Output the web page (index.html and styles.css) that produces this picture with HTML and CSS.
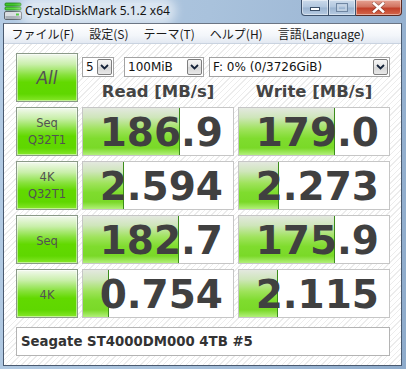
FILE: index.html
```html
<!DOCTYPE html>
<html lang="ja">
<head>
<meta charset="utf-8">
<title>CrystalDiskMark</title>
<link rel="stylesheet" href="styles.css">
</head>
<body>
<div class="window">
  <div class="titlebar">
    <svg class="app-icon" width="20" height="19" viewBox="0 0 20 19">
      <rect x="2" y="1" width="16" height="3" rx="1" fill="#3fc62a" stroke="#1f7d17" stroke-width="0.8"/>
      <rect x="2" y="5" width="16" height="3" rx="1" fill="#55d63a" stroke="#1f7d17" stroke-width="0.8"/>
      <rect x="1.5" y="9.5" width="17" height="8" rx="1.5" fill="#d9dde2" stroke="#5f6770" stroke-width="1"/>
      <rect x="2.5" y="14" width="15" height="3" fill="#aab1b9"/>
      <rect x="13" y="11.5" width="3" height="2" fill="#36c524"/>
    </svg>
    <span class="title">CrystalDiskMark 5.1.2 x64</span>
    <div class="captions">
      <div class="cb min"><svg width="10" height="4" viewBox="0 0 10 4"><rect x="0.5" y="0.5" width="9" height="3" fill="#fff" stroke="#3b4f68" stroke-width="1"/></svg></div>
      <div class="cb max"><svg width="12" height="9" viewBox="0 0 12 9"><rect x="0.5" y="0.5" width="11" height="8" fill="none" stroke="#6f86a2" stroke-width="1"/><rect x="2" y="2.5" width="8" height="4.5" fill="none" stroke="#c5d3e4" stroke-width="1.5"/></svg></div>
      <div class="cb close"><svg width="13" height="11" viewBox="0 0 13 11"><path d="M2 1.5 L11 9.5 M11 1.5 L2 9.5" stroke="#3a1d18" stroke-width="4" stroke-linecap="square" opacity="0.35"/><path d="M2 1.5 L11 9.5 M11 1.5 L2 9.5" stroke="#fff" stroke-width="2.6" stroke-linecap="square"/></svg></div>
    </div>
  </div>
  <div class="frame">
    <div class="menubar">
      <span class="menu-item">ファイル(F)</span>
      <span class="menu-item">設定(S)</span>
      <span class="menu-item">テーマ(T)</span>
      <span class="menu-item">ヘルプ(H)</span>
      <span class="menu-item">言語(Language)</span>
    </div>
    <div class="client">
      <div class="grid">
        <div class="btn all">All</div>
        <div class="controls">
          <div class="combos">
            <div class="combo c-count"><span class="combo-text">5</span><span class="drop"><svg width="9" height="6" viewBox="0 0 9 6"><path d="M1 1 L4.5 4.5 L8 1" fill="none" stroke="#142238" stroke-width="1.8"/></svg></span></div>
            <div class="combo c-size"><span class="combo-text">100MiB</span><span class="drop"><svg width="9" height="6" viewBox="0 0 9 6"><path d="M1 1 L4.5 4.5 L8 1" fill="none" stroke="#142238" stroke-width="1.8"/></svg></span></div>
            <div class="combo c-drive"><span class="combo-text">F: 0% (0/3726GiB)</span><span class="drop"><svg width="9" height="6" viewBox="0 0 9 6"><path d="M1 1 L4.5 4.5 L8 1" fill="none" stroke="#142238" stroke-width="1.8"/></svg></span></div>
          </div>
          <div class="heads">
            <div class="head">Read [MB/s]</div>
            <div class="head">Write [MB/s]</div>
          </div>
        </div>

        <div class="btn two"><span>Seq</span><span>Q32T1</span></div>
        <div class="cell"><div class="bar" style="width:97px"></div><span class="val">186.9</span></div>
        <div class="cell"><div class="bar" style="width:96px"></div><span class="val">179.0</span></div>

        <div class="btn two"><span>4K</span><span>Q32T1</span></div>
        <div class="cell"><div class="bar" style="width:41px"></div><span class="val">2.594</span></div>
        <div class="cell"><div class="bar" style="width:40px"></div><span class="val">2.273</span></div>

        <div class="btn one">Seq</div>
        <div class="cell"><div class="bar" style="width:96px"></div><span class="val">182.7</span></div>
        <div class="cell"><div class="bar" style="width:96px"></div><span class="val">175.9</span></div>

        <div class="btn one">4K</div>
        <div class="cell"><div class="bar" style="width:26px"></div><span class="val">0.754</span></div>
        <div class="cell"><div class="bar" style="width:39px"></div><span class="val">2.115</span></div>
      </div>
      <div class="comment">Seagate ST4000DM000 4TB #5</div>
    </div>
  </div>
</div>
</body>
</html>
```
FILE: styles.css
```css
* { box-sizing: border-box; }
html, body { margin: 0; padding: 0; }
body {
  width: 406px;
  height: 369px;
  overflow: hidden;
  font-family: "DejaVu Sans", sans-serif;
}
.window {
  width: 406px;
  height: 369px;
  background: linear-gradient(100deg, #b3cbe4 0%, #a9c2dc 45%, #9fb9d6 70%, #8eabcb 100%);
  display: flex;
  flex-direction: column;
}
.titlebar {
  height: 23px;
  display: flex;
  align-items: flex-start;
  flex-shrink: 0;
}
.app-icon {
  margin: 2px 0 0 3px;
  flex-shrink: 0;
}
.title {
  margin: 3px 0 0 2px;
  font-family: "Noto Sans", sans-serif;
  font-size: 12px;
  line-height: 16px;
  color: #141414;
  background: rgba(255, 255, 255, 0.55);
  border-radius: 8px;
  box-shadow: 0 0 10px 6px rgba(255, 255, 255, 0.55);
}
.captions {
  margin-left: auto;
  margin-right: 4px;
  display: flex;
}
.cb {
  height: 16px;
  border: 1px solid #3e526c;
  border-top: none;
  display: flex;
  align-items: center;
  justify-content: center;
  box-shadow: inset 0 0 0 1px rgba(255, 255, 255, 0.45);
}
.min {
  width: 28px;
  border-radius: 0 0 0 4px;
  background: linear-gradient(#cbdaeb, #b1c6de 48%, #9ab3d0 52%, #b7cbe2);
  padding-top: 3px;
}
.max {
  width: 27px;
  border-left: none;
  background: linear-gradient(#cbdaeb, #b1c6de 48%, #9ab3d0 52%, #b7cbe2);
}
.close {
  width: 46px;
  border-left: none;
  border-radius: 0 0 4px 0;
  background: linear-gradient(#e6a394, #d27461 45%, #c2402a 55%, #d4674c);
  border-color: #5a2a22;
}
.frame {
  margin: 0 4px 0 3px;
  border: 1px solid #4a5a70;
  border-top-color: #6b7584;
  background: #fff;
  display: flex;
  flex-direction: column;
}
.menubar {
  height: 20px;
  display: flex;
  align-items: center;
  background: linear-gradient(#ffffff, #f3f6fa 60%, #e3e9f2);
  border-bottom: 1px solid #c9d3e0;
  font-family: "Noto Sans CJK JP", sans-serif;
  font-size: 12px;
  color: #1a1a1a;
}
.menu-item {
  padding: 0 7.5px;
  line-height: 18px;
}
.client {
  height: 321px;
  padding: 9px 0 0 12px;
  background-color: #ffffff;
  background-image: repeating-linear-gradient(135deg, #ffffff 0px, #ffffff 3px, #ececec 3px, #ececec 4px);
}
.grid {
  display: grid;
  grid-template-columns: 62px 152px 152px;
  grid-auto-rows: 49px;
  column-gap: 4px;
  row-gap: 5px;
}
.btn {
  border: 1px solid #8a9a88;
  background: linear-gradient(#f3f9ef 0%, #c9efaa 22%, #86e13a 45%, #62d900 60%, #5fd700 85%, #86e72a 100%);
  box-shadow: inset 0 0 0 1px rgba(255, 255, 255, 0.5);
  color: #525252;
  display: flex;
  flex-direction: column;
  align-items: center;
  justify-content: center;
  font-size: 11.5px;
  line-height: 17px;
}
.btn.all {
  font-size: 17px;
  font-style: italic;
  padding-top: 2px;
}
.btn.two { padding-top: 1px; }
.btn.one { padding-top: 3px; }
.controls {
  grid-column: 2 / 4;
  display: flex;
  flex-direction: column;
}
.combos {
  margin-top: 4px;
  height: 20px;
  display: flex;
}
.combo {
  height: 20px;
  border: 1px solid #a3a3a3;
  background: #fff;
  display: flex;
  align-items: center;
  font-size: 12px;
  color: #111;
}
.combo-text {
  flex: 1;
  padding-left: 3px;
  white-space: nowrap;
}
.drop {
  width: 15px;
  height: 16px;
  margin-right: 1px;
  border: 1px solid #7f7f7f;
  border-radius: 2px;
  background: linear-gradient(#f6f6f6, #e4e4e4 50%, #d6d6d6 51%, #e8e8e8);
  display: flex;
  align-items: center;
  justify-content: center;
}
.c-count { width: 32px; }
.c-size { width: 80px; margin-left: 10px; }
.c-drive { width: 181px; margin-left: 5px; }
.heads {
  display: grid;
  grid-template-columns: 152px 152px;
  column-gap: 4px;
  margin-top: 5px;
}
.head {
  text-align: center;
  font-weight: bold;
  font-size: 16.5px;
  line-height: 20px;
  color: #444;
}
.cell {
  position: relative;
  border: 1px solid #c6c6c6;
  background: #fff;
  display: flex;
  align-items: center;
  justify-content: flex-end;
  padding: 3px 10px 0 0;
}
.bar {
  position: absolute;
  left: 0;
  top: 0;
  bottom: 0;
  background: linear-gradient(#e3e8df 0%, #cfe6bb 20%, #9fe35c 45%, #7fdc2e 65%, #7ad928 85%, #b2f07a 100%);
  border-right: 1px solid #3b8c1a;
}
.val {
  position: relative;
  font-weight: bold;
  font-size: 39px;
  line-height: 44px;
  color: #404040;
}
.comment {
  margin-top: 9px;
  width: 374px;
  height: 29px;
  border: 1px solid #b4b4b4;
  background: #fff;
  display: flex;
  align-items: center;
  padding-left: 4px;
  font-weight: bold;
  font-size: 13.3px;
  color: #333;
}
```
